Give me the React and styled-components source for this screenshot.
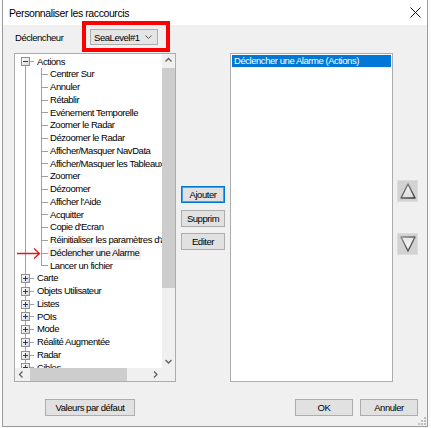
import React from 'react';
import styled, { createGlobalStyle, css } from 'styled-components';

const GlobalStyle = createGlobalStyle`
  html, body { margin: 0; padding: 0; background: #fbfbfb; }
  body { font-family: "Liberation Sans", Arial, sans-serif; }
`;

const Window = styled.div`
  position: relative;
  margin-left: 2px;
  width: 426px;
  height: 427px;
  box-sizing: border-box;
  border: 1px solid #9b9b9b;
  border-top: none;
  display: flex;
  flex-direction: column;
  background: #f0f0f0;
  font-family: "Liberation Sans", Arial, sans-serif;
  font-size: 9.5px;
  letter-spacing: -0.45px;
  color: #000;
`;

const TitleBar = styled.div`
  height: 25px;
  flex: none;
  background: #fff;
  display: flex;
  align-items: center;
  padding-left: 6px;
  font-size: 10.5px;
  letter-spacing: -0.4px;
`;

const CloseBox = styled.div`
  margin-left: auto;
  margin-right: 1px;
  width: 22px;
  height: 25px;
  display: flex;
  align-items: center;
  justify-content: center;
`;

const Body = styled.div`
  flex: 1;
  display: flex;
  flex-direction: column;
  padding: 4px 9px 0 11px;
`;

const TopRow = styled.div`
  height: 16px;
  display: flex;
  align-items: center;
`;

const Label = styled.div`
  width: 75px;
  padding-left: 1px;
`;

const ComboWrap = styled.div`
  position: relative;
`;

const Combo = styled.div`
  width: 68px;
  height: 16px;
  box-sizing: border-box;
  border: 1px solid #adadad;
  background: #e5e5e5;
  display: flex;
  align-items: center;
  padding: 0 5px 0 3px;
  justify-content: space-between;
`;

const RedFrame = styled.div`
  position: absolute;
  left: -8px;
  top: -8px;
  right: -12px;
  bottom: -7px;
  border: 4px solid #f00;
  pointer-events: none;
`;

const MainRow = styled.div`
  margin-top: 8px;
  height: 329px;
  display: flex;
`;

const Tree = styled.div`
  width: 164px;
  height: 100%;
  box-sizing: border-box;
  border: 1px solid #acacac;
  background: #fff;
  display: grid;
  grid-template-columns: 1fr 13px;
  grid-template-rows: 1fr 13px;
`;

const TreeContent = styled.div`
  position: relative;
  overflow: hidden;
  padding-top: 1.6px;
`;

const LINE = '#a0a0a0';
const vline = (x, pos, size) => `linear-gradient(${LINE}, ${LINE}) ${x}px ${pos} / 1px ${size} no-repeat`;
const hline = (x, w) => `linear-gradient(${LINE}, ${LINE}) ${x}px 50% / ${w}px 1px no-repeat`;

const TreeItem = styled.div`
  height: 12.75px;
  line-height: 12.75px;
  display: flex;
  align-items: center;
  white-space: nowrap;
  ${(p) =>
    p.$level === 0
      ? css`
          padding-left: 6px;
          gap: 5px;
          background: ${hline(14, 5)}, ${p.$first ? vline(10, '100%', '50%') : vline(10, '0', '100%')};
        `
      : css`
          padding-left: 33px;
          background: ${hline(26, 7)}, ${p.$last ? vline(26, '0', '50%') : vline(26, '0', '100%')},
            ${vline(10, '0', '100%')};
        `}
`;

const ItemText = styled.span`
  padding: 0 2px;
  background: ${(p) => (p.$hover ? '#f1f1f1' : 'transparent')};
`;

const ExpandBox = styled.svg`
  flex: none;
  display: block;
`;

const RedArrow = styled.svg`
  position: absolute;
  left: 1px;
  top: 193px;
`;

const VScroll = styled.div`
  background: #f0f0f0;
  display: flex;
  flex-direction: column;
`;

const HScroll = styled.div`
  background: #f0f0f0;
  display: flex;
`;

const Corner = styled.div`
  background: #f0f0f0;
`;

const ArrowCell = styled.div`
  flex: none;
  width: 13px;
  height: 13px;
  display: flex;
  align-items: center;
  justify-content: center;
`;

const VTrack = styled.div`
  flex: 1;
  padding: 1px 0 0;
`;

const VThumb = styled.div`
  height: 220px;
  background: #cdcdcd;
`;

const HTrack = styled.div`
  flex: 1;
  display: flex;
  align-items: stretch;
  padding-left: 2px;
`;

const HThumb = styled.div`
  width: 97px;
  background: #cdcdcd;
`;

const MiddleCol = styled.div`
  width: 44px;
  margin-left: 5px;
  padding-top: 133px;
  display: flex;
  flex-direction: column;
  gap: 6.5px;
`;

const Button = styled.div`
  width: ${(p) => p.$w || 44}px;
  height: 17px;
  box-sizing: border-box;
  border: 1px solid ${(p) => (p.$default ? '#0078d7' : '#adadad')};
  box-shadow: ${(p) => (p.$default ? 'inset 0 0 0 1px #4d9be0' : 'none')};
  background: #e1e1e1;
  display: flex;
  align-items: center;
  justify-content: center;
  flex: none;
`;

const ListBox = styled.div`
  margin-left: 5px;
  width: 165px;
  height: 100%;
  box-sizing: border-box;
  border: 1px solid #acacac;
  background: #fff;
  padding: 1px;
`;

const SelectedItem = styled.div`
  height: 12px;
  line-height: 12px;
  background: #0078d7;
  color: #fff;
  padding-left: 2px;
  white-space: nowrap;
`;

const ArrowCol = styled.div`
  margin-left: 4px;
  width: 21px;
  padding-top: 127px;
  display: flex;
  flex-direction: column;
  gap: 31px;
`;

const MoveBtn = styled.div`
  width: 21px;
  height: 22px;
  box-sizing: border-box;
  background: #d2d2d2;
  border: 1px solid #dcdcdc;
  display: flex;
  align-items: center;
  justify-content: center;
`;

const BottomRow = styled.div`
  margin-top: 17px;
  display: flex;
  padding-left: 31px;
  gap: 7px;
`;

const Spacer = styled.div`
  flex: 1;
`;

const Grip = styled.svg`
  position: absolute;
  right: 1px;
  bottom: 1px;
`;

const Chevron = ({ dir }) => {
  const pts = {
    up: '3.5,7.5 6.5,4.5 9.5,7.5',
    down: '3.5,5 6.5,8 9.5,5',
    left: '7.5,3.5 4.5,6.5 7.5,9.5',
    right: '5,3.5 8,6.5 5,9.5',
  }[dir];
  return (
    <svg width="13" height="13" viewBox="0 0 13 13">
      <polyline points={pts} fill="none" stroke="#606060" strokeWidth="1.3" />
    </svg>
  );
};

const Expander = ({ open }) => (
  <ExpandBox width="9" height="9" viewBox="0 0 9 9">
    <defs>
      <linearGradient id={open ? 'exo' : 'exc'} x1="0" y1="0" x2="1" y2="1">
        <stop offset="0" stopColor="#ffffff" />
        <stop offset="1" stopColor="#d6d6d6" />
      </linearGradient>
    </defs>
    <rect x="0.5" y="0.5" width="8" height="8" fill={`url(#${open ? 'exo' : 'exc'})`} stroke="#919191" />
    <line x1="2" y1="4.5" x2="7" y2="4.5" stroke="#1f3a70" />
    {!open && <line x1="4.5" y1="2" x2="4.5" y2="7" stroke="#1f3a70" />}
  </ExpandBox>
);

const Triangle = ({ dir }) => {
  const id = `tg-${dir}`;
  const pts = dir === 'up' ? '8,1 15,15 1,15' : '1,1 15,1 8,15';
  return (
    <svg width="16" height="16" viewBox="0 0 16 16">
      <defs>
        <linearGradient id={id} x1="0" y1="0" x2="0" y2="1">
          <stop offset="0" stopColor={dir === 'up' ? '#f6f6f6' : '#e6e6e6'} />
          <stop offset="1" stopColor={dir === 'up' ? '#dcdcdc' : '#fafafa'} />
        </linearGradient>
        <linearGradient id={`${id}-s`} x1="0" y1="0" x2="1" y2="1">
          <stop offset="0" stopColor="#8a8a8a" />
          <stop offset="1" stopColor="#3a3a3a" />
        </linearGradient>
      </defs>
      <polygon points={pts} fill={`url(#${id})`} stroke={`url(#${id}-s)`} strokeWidth="1.4" strokeLinejoin="round" />
    </svg>
  );
};

const actions = [
  'Centrer Sur',
  'Annuler',
  'Rétablir',
  'Evénement Temporelle',
  'Zoomer le Radar',
  'Dézoomer le Radar',
  'Afficher/Masquer NavData',
  'Afficher/Masquer les Tableaux',
  'Zoomer',
  'Dézoomer',
  "Afficher l'Aide",
  'Acquitter',
  "Copie d'Ecran",
  "Réinitialiser les paramètres d'affichage",
  'Déclencher une Alarme',
  'Lancer un fichier',
];

const groups = ['Carte', 'Objets Utilisateur', 'Listes', 'POIs', 'Mode', 'Réalité Augmentée', 'Radar', 'Cibles'];

export default function App() {
  return (
    <>
      <GlobalStyle />
      <Window>
        <TitleBar>
          Personnaliser les raccourcis
          <CloseBox>
            <svg width="11" height="11" viewBox="0 0 11 11">
              <path d="M0.5 0.5 L10.5 10.5 M10.5 0.5 L0.5 10.5" stroke="#111" strokeWidth="1" />
            </svg>
          </CloseBox>
        </TitleBar>
        <Body>
          <TopRow>
            <Label>Déclencheur</Label>
            <ComboWrap>
              <Combo>
                <span>SeaLevel#1</span>
                <svg width="7" height="4" viewBox="0 0 7 4">
                  <polyline points="0.5,0.5 3.5,3.5 6.5,0.5" fill="none" stroke="#555" strokeWidth="1" />
                </svg>
              </Combo>
              <RedFrame />
            </ComboWrap>
          </TopRow>
          <MainRow>
            <Tree>
              <TreeContent>
                <TreeItem $level={0} $first>
                  <Expander open />
                  <ItemText>Actions</ItemText>
                </TreeItem>
                {actions.map((a, i) => (
                  <TreeItem key={a} $level={1} $last={i === actions.length - 1}>
                    <ItemText $hover={a === 'Déclencher une Alarme'}>{a}</ItemText>
                  </TreeItem>
                ))}
                {groups.map((g) => (
                  <TreeItem key={g} $level={0}>
                    <Expander />
                    <ItemText>{g}</ItemText>
                  </TreeItem>
                ))}
                <RedArrow width="26" height="13" viewBox="0 0 26 13">
                  <path d="M1 6.5 H23.5 M18 1.5 L23.5 6.5 L18 11.5" fill="none" stroke="#e8141b" strokeWidth="1.3" />
                </RedArrow>
              </TreeContent>
              <VScroll>
                <ArrowCell><Chevron dir="up" /></ArrowCell>
                <VTrack><VThumb /></VTrack>
                <ArrowCell><Chevron dir="down" /></ArrowCell>
              </VScroll>
              <HScroll>
                <ArrowCell><Chevron dir="left" /></ArrowCell>
                <HTrack><HThumb /></HTrack>
                <ArrowCell><Chevron dir="right" /></ArrowCell>
              </HScroll>
              <Corner />
            </Tree>
            <MiddleCol>
              <Button $default>Ajouter</Button>
              <Button>Supprim</Button>
              <Button>Editer</Button>
            </MiddleCol>
            <ListBox>
              <SelectedItem>Déclencher une Alarme (Actions)</SelectedItem>
            </ListBox>
            <ArrowCol>
              <MoveBtn><Triangle dir="up" /></MoveBtn>
              <MoveBtn><Triangle dir="down" /></MoveBtn>
            </ArrowCol>
          </MainRow>
          <BottomRow>
            <Button $w={90}>Valeurs par défaut</Button>
            <Spacer />
            <Button $w={58}>OK</Button>
            <Button $w={58}>Annuler</Button>
          </BottomRow>
        </Body>
        <Grip width="8" height="8" viewBox="0 0 8 8">
          {[[6, 0], [6, 3], [3, 3], [6, 6], [3, 6], [0, 6]].map(([x, y]) => (
            <rect key={`${x}-${y}`} x={x} y={y} width="2" height="2" fill="#bdbdbd" />
          ))}
        </Grip>
      </Window>
    </>
  );
}
